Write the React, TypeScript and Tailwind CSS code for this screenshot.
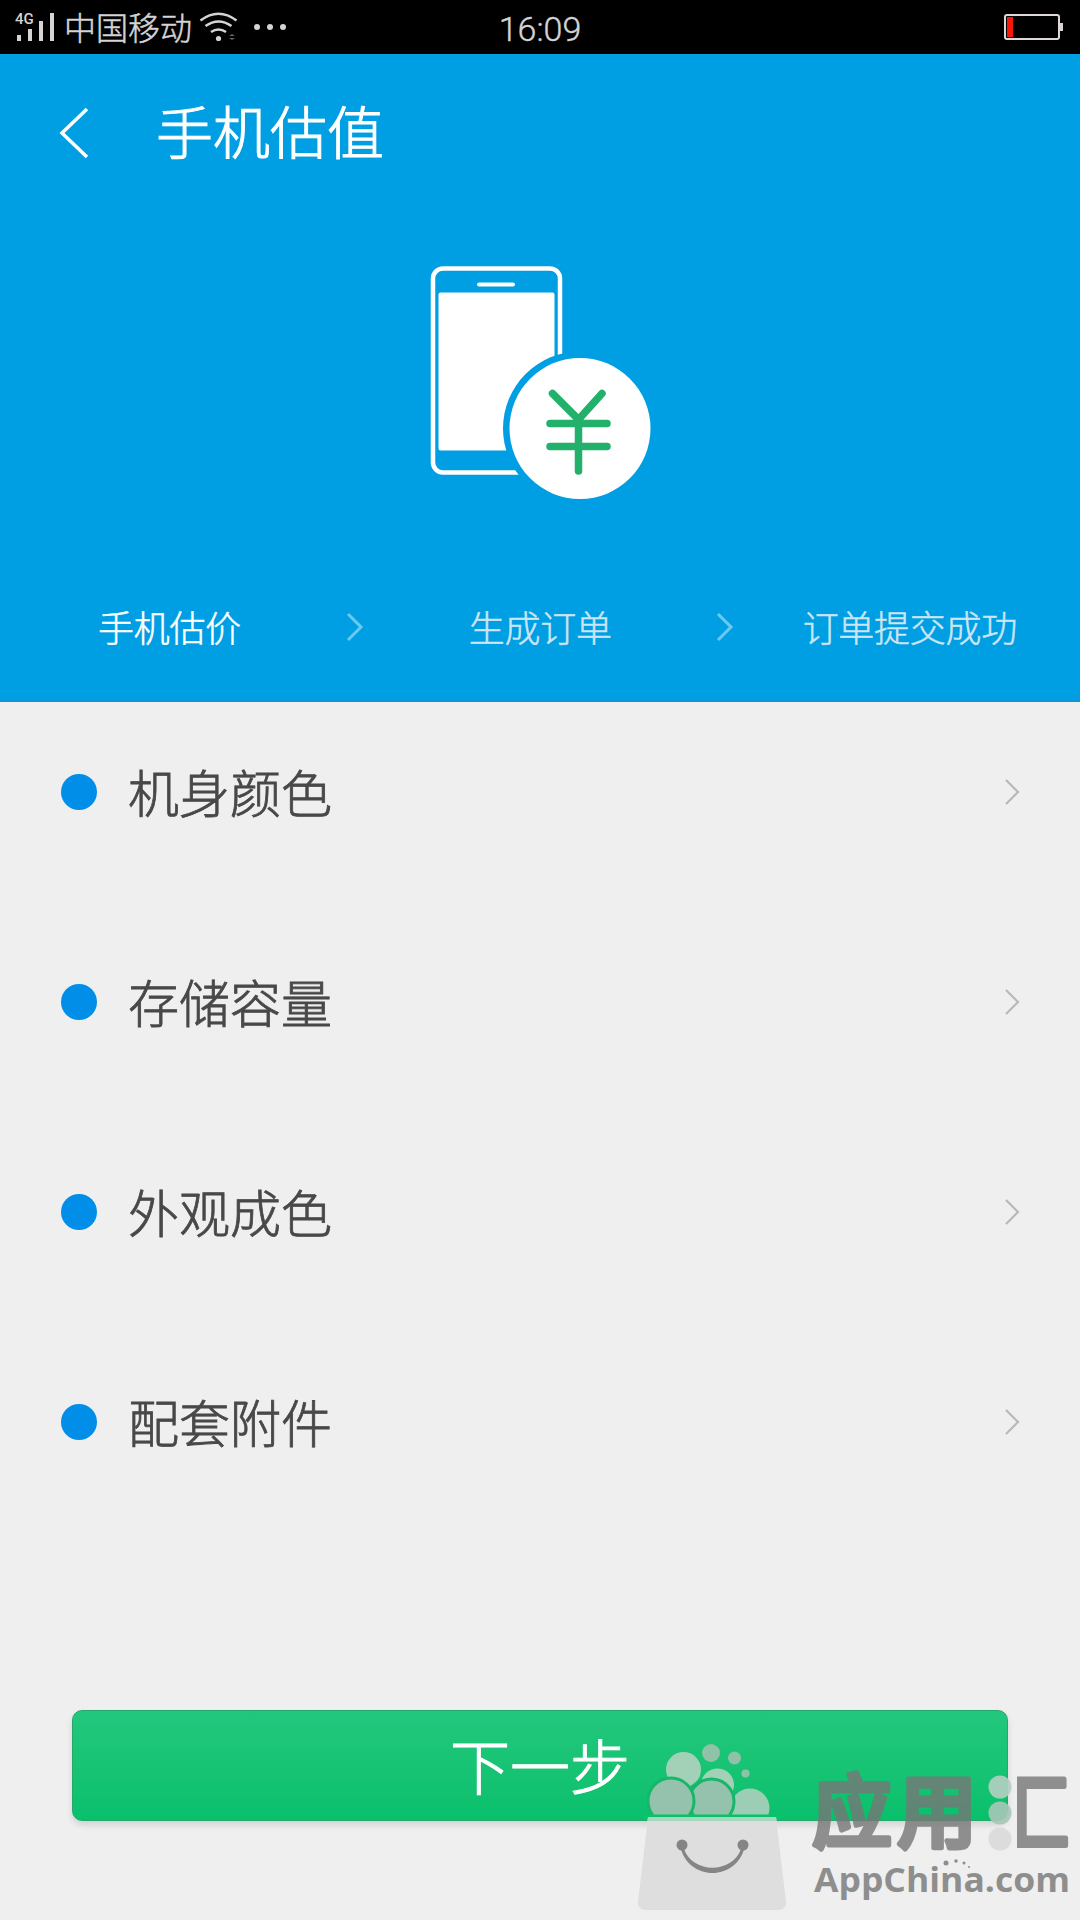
interface StepProps {
	label: string;
	active?: boolean;
}

interface OptionRowProps {
	title: string;
}

const options = ["机身颜色", "存储容量", "外观成色", "配套附件"];

const StatusBar = () => {
	return (
		<div className="h-[54px] bg-black text-[#d4d4d4] flex items-center justify-between relative">
			<div className="flex items-center h-full">
				<svg width="64" height="54" viewBox="0 0 64 54" fill="#d4d4d4">
					<text x="15" y="24" fontSize="15" fontWeight="500" fontFamily="Roboto, sans-serif">4G</text>
					<rect x="17" y="35" width="4" height="6" />
					<rect x="28" y="29" width="4" height="12" />
					<rect x="39" y="21" width="4" height="20" />
					<rect x="50" y="13" width="4" height="28" />
				</svg>
				<span className="text-[32px] leading-[54px] w-[130px] font-light relative -top-px [-webkit-text-stroke:0.5px]">中国移动</span>
				<svg width="100" height="54" viewBox="194 0 100 54" fill="none" stroke="#d4d4d4" strokeWidth="2.6">
					<path d="M200.500 20.500Q218.500 7 236.500 20.500" />
					<path d="M205.500 26Q218.500 17 231.500 26" />
					<path d="M211 32Q218.500 27 226 32" />
					<circle cx="218.500" cy="38.500" r="2.600" fill="#d4d4d4" stroke="none" />
					<path d="M229 36l3-2 3 2zM229 38l3 2 3-2z" fill="#666" stroke="none" />
					<g fill="#d4d4d4" stroke="none">
						<circle cx="257" cy="27" r="3" />
						<circle cx="270" cy="27" r="3" />
						<circle cx="283" cy="27" r="3" />
					</g>
				</svg>
			</div>
			<span className="absolute left-0 right-0 top-[2px] text-center leading-[54px] text-[34px] font-light font-[Roboto,sans-serif] [-webkit-text-stroke:0.4px]">16:09</span>
			<svg width="80" height="54" viewBox="1000 0 80 54">
				<rect x="1005" y="15" width="54" height="24" rx="2" fill="none" stroke="#e0d8d8" strokeWidth="2" />
				<rect x="1007" y="17" width="6" height="20" fill="#f51808" />
				<rect x="1060" y="23" width="3" height="8" fill="#d4d4d4" />
			</svg>
		</div>
	);
};

const PhoneIcon = () => {
	return (
		<svg width="222" height="250" viewBox="430 265 222 250" className="block">
			<rect x="433" y="268.500" width="127" height="204" rx="10" fill="none" stroke="#fff" strokeWidth="4.500" />
			<rect x="477" y="282.500" width="38" height="4" rx="2" fill="#fff" />
			<rect x="438.500" y="292.500" width="116" height="158" rx="2" fill="#fff" />
			<circle cx="580" cy="428.500" r="77" fill="#009ee3" />
			<circle cx="580" cy="428.500" r="70.500" fill="#fff" />
			<path
				d="M552.500 393.500L578.500 419.500L602 393.500M550 423.500H607M550 446.500H607M578.500 419V471"
				fill="none"
				stroke="#22b06a"
				strokeWidth="7.500"
				strokeLinecap="round"
			/>
		</svg>
	);
};

const Step = ({ label, active }: StepProps) => {
	return <span className={active ? "relative -top-px text-white" : "relative -top-px text-[#cbe5f3]"}>{label}</span>;
};

const StepArrow = () => {
	return (
		<svg width="20" height="30" viewBox="0 0 20 30" fill="none" stroke="#6bc8f1" strokeWidth="3">
			<path d="M3 2L16 15L3 28" />
		</svg>
	);
};

const OptionRow = ({ title }: OptionRowProps) => {
	return (
		<div className="h-[210px] flex items-start">
			<div className="h-[60px] w-full flex items-center pl-[61px] pr-[60px]">
				<div className="size-9 rounded-full bg-[#008ee9]" />
				<span className="ml-[31px] text-[51px] leading-[60px] text-[#484848] font-light relative -top-px [-webkit-text-stroke:0.8px]">{title}</span>
				<svg className="ml-auto" width="15" height="28" viewBox="0 0 15 28" fill="none" stroke="#b8b8b8" strokeWidth="2.200">
					<path d="M1 2L13 14L1 26" />
				</svg>
			</div>
		</div>
	);
};

const Watermark = () => {
	return (
		<svg className="absolute left-[630px] top-[1735px]" width="450" height="185" viewBox="630 1735 450 185">
			<defs>
				<clipPath id="bubbles">
					<rect x="640" y="1735" width="140" height="79.500" />
				</clipPath>
				<clipPath id="frame">
					<rect x="1017" y="1760" width="60" height="100" />
				</clipPath>
			</defs>
			<g clipPath="url(#bubbles)">
				<circle cx="683.500" cy="1769.500" r="17.500" fill="#a2d1b8" />
				<circle cx="717.500" cy="1785" r="16.500" fill="#a2d1b8" />
				<circle cx="750" cy="1808" r="19.500" fill="#9cceb5" />
				<circle cx="711.500" cy="1801.500" r="22.500" fill="#94c2ac" stroke="#17b76b" strokeWidth="3" />
				<circle cx="671" cy="1801" r="23" fill="#94c2ac" stroke="#17b76b" strokeWidth="3" />
				<circle cx="711" cy="1753" r="9" fill="#8fc2a7" />
				<circle cx="734.500" cy="1758" r="6.500" fill="#8fc2a7" />
				<circle cx="745.500" cy="1773.500" r="4" fill="#8fc2a7" />
			</g>
			<path d="M648 1817H776L786 1902Q786 1910 778 1910H646Q638 1910 638 1902Z" fill="#dedede" />
			<path d="M648 1817H776L776.500 1821H647.500Z" fill="#a5d8bd" />
			<g fill="#858585">
				<circle cx="682" cy="1845" r="5.500" />
				<circle cx="743" cy="1845" r="5.500" />
				<path d="M680 1846C688 1882 737 1882 745 1846L741 1849C732 1874 693 1874 684 1849Z" />
			</g>
			<g fill="#777" stroke="#777" strokeWidth="5" strokeLinejoin="round" opacity="0.8" fontSize="80" fontWeight="500">
				<text x="812" y="1841">应</text>
				<text x="897" y="1841">用</text>
				<g clipPath="url(#frame)">
					<text x="989" y="1842">汇</text>
				</g>
			</g>
			<circle cx="1000" cy="1787" r="11.500" fill="#b4cfc1" opacity="0.900" />
			<circle cx="1000" cy="1813" r="11.500" fill="#a9c6b7" opacity="0.900" />
			<circle cx="1000" cy="1839" r="11.500" fill="#dcdcdc" />
			<text x="814" y="1892" textLength="256" lengthAdjust="spacingAndGlyphs" fontSize="34" fontWeight="700" fontFamily="'Open Sans', sans-serif" fill="#8e8e8e">AppChina.com</text>
			<g fill="#8e8e8e">
				<circle cx="946" cy="1863" r="2.500" />
				<circle cx="956" cy="1861" r="1.800" />
				<circle cx="964" cy="1863" r="1.500" />
				<circle cx="969" cy="1867" r="1" />
			</g>
		</svg>
	);
};

const App = () => {
	return (
		<div className="relative w-[1080px] h-[1920px] overflow-hidden bg-[#efefef] flex flex-col font-['Noto_Sans_CJK_SC',sans-serif]">
			<StatusBar />
			<header className="h-[648px] bg-[#009ee3] border-b-2 border-[#0d93d8] text-white">
				<div className="h-[156px] flex items-center pl-[58px]">
					<svg width="34" height="54" viewBox="0 0 34 54" fill="none" stroke="#fff" strokeWidth="3.500" className="relative top-px">
						<path d="M29 3L4 27L29 51" />
					</svg>
					<h1 className="ml-[64px] text-[57px] leading-[80px] font-light relative -top-[3px] [-webkit-text-stroke:1px]">手机估值</h1>
				</div>
				<div className="h-[343px] pt-[55px] pl-[430px]">
					<PhoneIcon />
				</div>
				<div className="h-[116px] flex items-center text-[36px] leading-[54px] font-light pt-[32px] pl-[98px] tracking-[-0.3px] [-webkit-text-stroke:0.5px]">
					<Step label="手机估价" active />
					<div className="w-[228px] flex pl-[104px]">
						<StepArrow />
					</div>
					<Step label="生成订单" />
					<div className="w-[191px] flex pl-[103px]">
						<StepArrow />
					</div>
					<Step label="订单提交成功" />
				</div>
			</header>
			<main className="pt-[60px]">
				{options.map((title) => (
					<OptionRow key={title} title={title} />
				))}
			</main>
			<button className="mt-[108px] mx-[72px] h-[111px] shrink-0 rounded-[10px] border border-[#25a86c] bg-linear-to-b from-[#22c77d] to-[#08c06b] shadow-[0_4px_6px_rgba(0,0,0,0.12)] text-white text-[60px] leading-[105px] pb-1 font-light [-webkit-text-stroke:1px]">
				下一步
			</button>
			<Watermark />
		</div>
	);
};

export default App;
